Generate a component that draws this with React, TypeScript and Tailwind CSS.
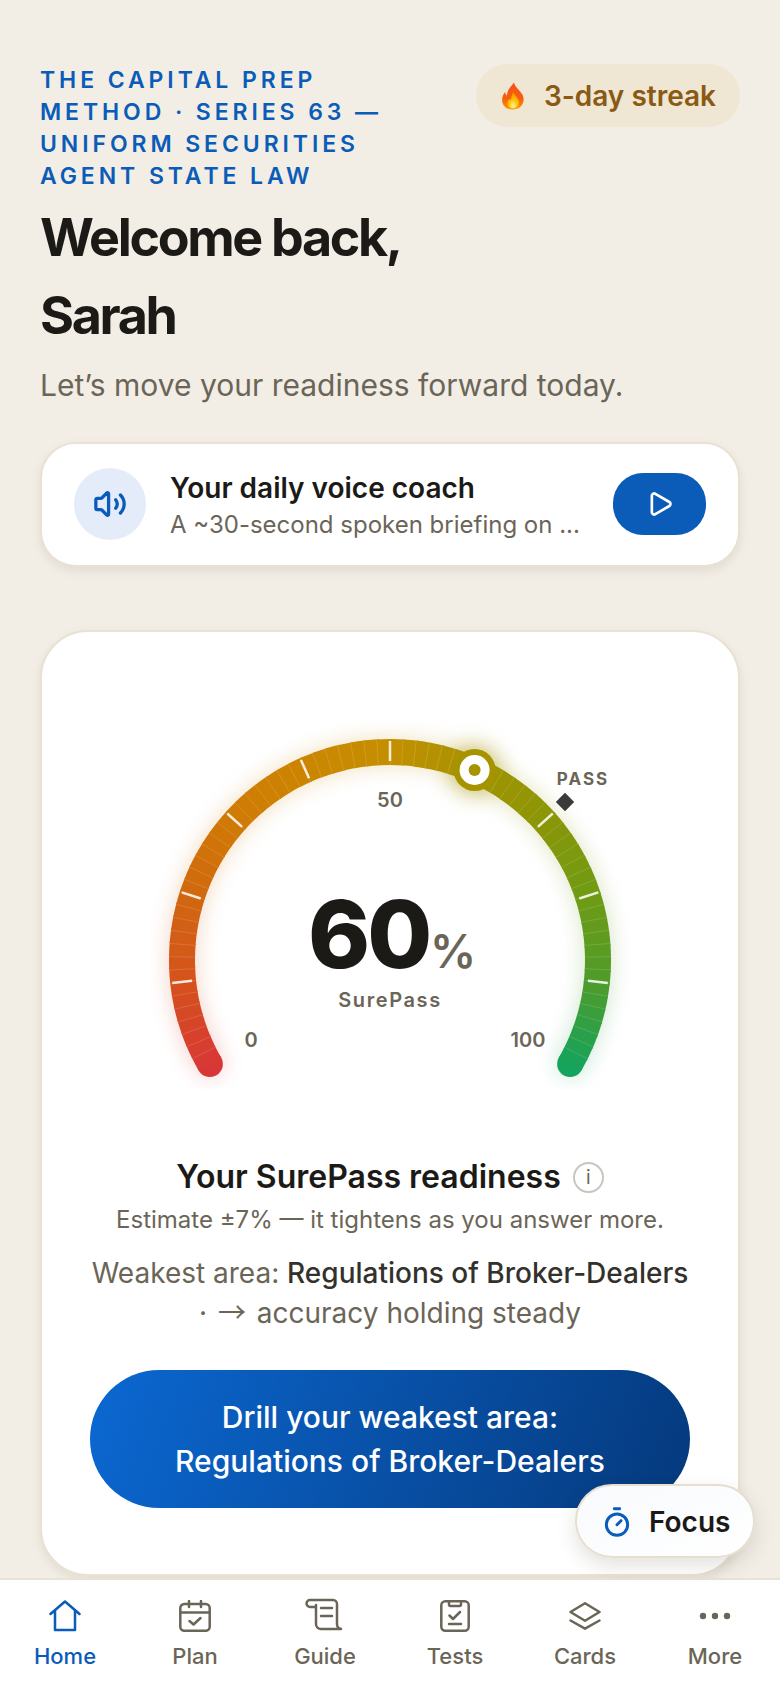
import React from 'react';
import { Volume2, Play, Timer } from 'lucide-react';

const CENTER_X = 240;
const CENTER_Y = 251;
const RADIUS = 208;
const START_DEG = 210;
const SWEEP = 240;
const SEGMENTS = 70;

const stops: [number, number[]][] = [
  [0, [216, 56, 53]],
  [0.1, [213, 82, 28]],
  [0.2, [209, 104, 15]],
  [0.3, [207, 122, 5]],
  [0.4, [204, 133, 0]],
  [0.5, [196, 143, 0]],
  [0.6, [165, 147, 0]],
  [0.7, [138, 150, 7]],
  [0.8, [111, 155, 20]],
  [0.9, [79, 155, 42]],
  [1, [22, 163, 92]],
];

const colorAt = (t: number) => {
  for (let i = 1; i < stops.length; i++) {
    if (t <= stops[i][0]) {
      const [t0, c0] = stops[i - 1];
      const [t1, c1] = stops[i];
      const k = (t - t0) / (t1 - t0);
      const c = c0.map((v, j) => Math.round(v + (c1[j] - v) * k));
      return `rgb(${c[0]},${c[1]},${c[2]})`;
    }
  }
  return 'rgb(22,163,92)';
};

const polar = (t: number, r: number) => {
  const a = ((START_DEG - SWEEP * t) * Math.PI) / 180;
  return { x: CENTER_X + r * Math.cos(a), y: CENTER_Y - r * Math.sin(a) };
};

const segments = Array.from({ length: SEGMENTS }, (_, i) => {
  const a = polar(i / SEGMENTS, RADIUS);
  const b = polar(Math.min(i + 1.15, SEGMENTS) / SEGMENTS, RADIUS);
  return {
    d: `M${a.x} ${a.y} A${RADIUS} ${RADIUS} 0 0 1 ${b.x} ${b.y}`,
    color: colorAt((i + 0.5) / SEGMENTS),
  };
});

const ArcBody: React.FC = () => {
  const first = polar(0, RADIUS);
  const last = polar(1, RADIUS);
  return (
    <>
      <circle cx={first.x} cy={first.y} r={13} fill={colorAt(0)} />
      <circle cx={last.x} cy={last.y} r={13} fill={colorAt(1)} />
      {segments.map((s, i) => (
        <path key={i} d={s.d} stroke={s.color} strokeWidth={26} fill="none" />
      ))}
    </>
  );
};

const Gauge: React.FC = () => {
  const thumb = polar(0.6, RADIUS);
  const pass = { x: 415, y: 93 };
  return (
    <svg width={480} height={380} viewBox="0 0 480 380" className="block mx-auto">
      <defs>
        <filter id="arcGlow" filterUnits="userSpaceOnUse" x="0" y="0" width="480" height="380">
          <feGaussianBlur stdDeviation="11" />
        </filter>
      </defs>
      <g filter="url(#arcGlow)" opacity={0.26}>
        <ArcBody />
      </g>
      <circle cx={thumb.x} cy={thumb.y} r={25} fill="#a59300" opacity={0.5} filter="url(#arcGlow)" />
      <ArcBody />
      {Array.from({ length: SEGMENTS - 1 }, (_, i) => {
        const t = (i + 1) / SEGMENTS;
        const a = polar(t, 195);
        const b = polar(t, 221);
        return <line key={i} x1={a.x} y1={a.y} x2={b.x} y2={b.y} stroke="#ffffff" strokeOpacity={0.14} strokeWidth={1} />;
      })}
      {[0.1, 0.2, 0.3, 0.4, 0.5, 0.6, 0.7, 0.8, 0.9].map((t) => {
        const a = polar(t, 199);
        const b = polar(t, 219);
        return <line key={t} x1={a.x} y1={a.y} x2={b.x} y2={b.y} stroke="#ffffff" strokeOpacity={0.85} strokeWidth={2.5} />;
      })}
      <circle cx={thumb.x} cy={thumb.y} r={21} fill="#a59300" />
      <circle cx={thumb.x} cy={thumb.y} r={15} fill="#ffffff" />
      <circle cx={thumb.x} cy={thumb.y} r={6} fill="#a59300" />
      <rect x={pass.x - 6.5} y={pass.y - 6.5} width={13} height={13} fill="#3a3a38" transform={`rotate(45 ${pass.x} ${pass.y})`} />
      <g fill="#6b6558" fontWeight={600}>
        <text x={240} y={98} textAnchor="middle" fontSize={20}>50</text>
        <text x={101} y={338} textAnchor="middle" fontSize={20}>0</text>
        <text x={378} y={338} textAnchor="middle" fontSize={20}>100</text>
        <text x={433} y={76} textAnchor="middle" fontSize={17} fontWeight={700} letterSpacing={2}>PASS</text>
        <text x={240} y={298} textAnchor="middle" fontSize={20} letterSpacing={1.6}>SurePass</text>
      </g>
      <text x={158} y={259} fontSize={94} fontWeight={800} fill="#1c1a17" letterSpacing={-3}>60</text>
      <text x={280} y={259} fontSize={46} fontWeight={600} fill="#6b6558">%</text>
    </svg>
  );
};

const Flame: React.FC = () => (
  <svg width={24} height={28} viewBox="0 0 24 28">
    <defs>
      <linearGradient id="flameOuter" x1="0" y1="0" x2="0" y2="1">
        <stop offset="0" stopColor="#f4511e" />
        <stop offset="0.6" stopColor="#f4600c" />
        <stop offset="1" stopColor="#ff9800" />
      </linearGradient>
      <radialGradient id="flameInner" cx="0.5" cy="0.85" r="0.7">
        <stop offset="0" stopColor="#fff59d" />
        <stop offset="0.55" stopColor="#ffc107" />
        <stop offset="1" stopColor="#ff9800" />
      </radialGradient>
    </defs>
    <path d="M13 0.5c1 5 6 7.5 8.6 12.5 2.6 5.5 0.4 14-9.6 14.5C3 27.500.2 21 1.4 15.500c0.5-2.500 1.800-4.500 2.800-5.500 0.200 1.800 0.700 3 1.800 3.800C6 8 9.500 5 13 0.500z" fill="url(#flameOuter)" />
    <path d="M12.500 10c0.500 3 5 5.500 5.500 10 0.300 3.800-2.500 6.500-6 6.500s-6-2.500-5.500-6c0.300-2 1.500-3.200 2.200-4 0.300 1 0.800 1.500 1.300 1.800 0-3 1-6 2.500-8.300z" fill="url(#flameInner)" />
  </svg>
);

const HomeIcon = () => (
  <svg width={32} height={32} viewBox="0 0 32 32" fill="none" stroke="currentColor" strokeWidth={2.5} strokeLinecap="round" strokeLinejoin="round">
    <path d="M1.500 14 16 1.500 30.500 14M6 10.500V30h20V10.500" />
  </svg>
);

const PlanIcon = () => (
  <svg width={32} height={32} viewBox="0 0 32 32" fill="none" stroke="currentColor" strokeWidth={2.5} strokeLinecap="round" strokeLinejoin="round">
    <rect x={1.3} y={4} width={29.4} height={26.8} rx={4} />
    <path d="M1.300 12.500h29.400M10 1v6M22 1v6M10.500 21l4 3.500 7-6.500" />
  </svg>
);

const GuideIcon = () => (
  <svg width={40} height={36} viewBox="0 0 40 36" fill="none" stroke="currentColor" strokeWidth={2.5} strokeLinecap="round" strokeLinejoin="round">
    <path d="M5 2h23a4 4 0 0 1 4 4v20a5 5 0 0 0 4 5H16a5 5 0 0 1-5-5V7M5 2a3.500 3.500 0 0 0 0 7h6M16 10h11M16 18h11" />
  </svg>
);

const TestsIcon = () => (
  <svg width={30} height={32} viewBox="0 0 30 32" fill="none" stroke="currentColor" strokeWidth={2.5} strokeLinecap="round" strokeLinejoin="round">
    <rect x={1.300} y={1.300} width={27.400} height={29.400} rx={4} />
    <path d="M9 1.500v3a1.500 1.500 0 0 0 1.500 1.500h9a1.500 1.500 0 0 0 1.500-1.500v-3M9.500 15.500l3.500 3.500 7-7M9 24h12" />
  </svg>
);

const CardsIcon = () => (
  <svg width={32} height={28} viewBox="0 0 32 28" fill="none" stroke="currentColor" strokeWidth={2.5} strokeLinecap="round" strokeLinejoin="round">
    <path d="M16 1.300 30.500 10 16 18.700 1.500 10zM1.500 18.500 16 26.700l14.500-8.200" />
  </svg>
);

const MoreIcon = () => (
  <svg width={32} height={8} viewBox="0 0 32 8" fill="currentColor">
    <circle cx={4} cy={4} r={3.200} />
    <circle cx={16} cy={4} r={3.200} />
    <circle cx={28} cy={4} r={3.200} />
  </svg>
);

const navItems = [
  { label: 'Home', icon: <HomeIcon />, active: true },
  { label: 'Plan', icon: <PlanIcon /> },
  { label: 'Guide', icon: <GuideIcon /> },
  { label: 'Tests', icon: <TestsIcon /> },
  { label: 'Cards', icon: <CardsIcon /> },
  { label: 'More', icon: <MoreIcon /> },
];

const App: React.FC = () => {
  return (
    <div className="relative h-[1688px] w-[780px] overflow-hidden bg-[#f2eee6] font-[Inter,sans-serif] flex flex-col">
      <main className="flex-1 min-h-0 overflow-hidden px-[40px] pt-[64px]">
        <div className="flex items-start justify-between">
          <p className="w-[355px] text-[23px] leading-[32px] font-semibold tracking-[0.17em] text-[#0a5cb8]">
            THE CAPITAL PREP METHOD · SERIES 63 — UNIFORM SECURITIES AGENT STATE LAW
          </p>
          <div className="flex h-[63px] items-center gap-[19px] rounded-full bg-[#efe6d3] pl-[25px] pr-[24px]">
            <Flame />
            <span className="text-[28px] font-semibold text-[#8a5a14]">3-day streak</span>
          </div>
        </div>
        <h1 className="mt-[7px] text-[52px] leading-[78px] font-bold tracking-[-0.045em] text-[#1c1a17]">
          Welcome back,
          <br />
          Sarah
        </h1>
        <p className="mt-[8px] text-[30px] leading-[44px] text-[#6b6558]">Let’s move your readiness forward today.</p>

        <section className="mt-[35px] flex h-[125px] items-center rounded-[36px] border-2 border-[#e9e1d2] bg-white pb-[2px] pl-[32px] pr-[32px] shadow-[0_4px_10px_rgba(90,70,30,0.1)]">
          <div className="flex h-[72px] w-[72px] shrink-0 items-center justify-center rounded-full bg-[#e3ecf8] text-[#0a5cb8]">
            <Volume2 size={34} strokeWidth={2.3} />
          </div>
          <div className="ml-[24px] mt-[2px] min-w-0 flex-1">
            <div className="text-[28px] leading-[40px] font-semibold text-[#1c1a17]">Your daily voice coach</div>
            <div className="text-[24px] leading-[34px] text-[#6b6558]">A ~30-second spoken briefing on ...</div>
          </div>
          <button className="flex h-[62px] w-[93px] shrink-0 items-center justify-center rounded-[30px] bg-[#0a5cb8] text-white">
            <Play size={28} strokeWidth={2.3} />
          </button>
        </section>

        <section className="mt-[63px] rounded-[48px] border-2 border-[#e9e1d2] bg-white px-[48px] pt-[77px] pb-[66px] shadow-[0_4px_10px_rgba(90,70,30,0.1)]">
          <div className="-mx-[48px]">
            <Gauge />
          </div>
          <div className="mt-[66px] flex items-center justify-center gap-[12px]">
            <h2 className="text-[32px] leading-[44px] font-semibold text-[#1c1a17]">Your SurePass readiness</h2>
            <span className="flex h-[31px] w-[31px] items-center justify-center rounded-full border-2 border-[#c9c6bf] text-[19px] leading-none text-[#6b6558]">i</span>
          </div>
          <p className="mt-[3px] text-center text-[24px] leading-[36px] text-[#6b6558]">Estimate ±7% — it tightens as you answer more.</p>
          <p className="mt-[15px] text-center text-[28px] leading-[40px] text-[#6b6558]">
            Weakest area: <span className="font-medium text-[#33312c]">Regulations of Broker-Dealers</span>
            <br />· <span className="mx-[3px] font-['Noto_Sans_CJK_JP',sans-serif] leading-none">→</span> accuracy holding steady
          </p>
          <button className="mt-[37px] block h-[138px] w-full rounded-full bg-[linear-gradient(110deg,#0b68d2,#05397c)] text-center text-[30px] leading-[44px] font-medium text-white">
            Drill your weakest area:
            <br />
            Regulations of Broker-Dealers
          </button>
        </section>
      </main>

      <nav className="relative grid h-[110px] shrink-0 grid-cols-6 border-t-2 border-[#e9e3d7] bg-white pt-[19px]">
        {navItems.map((item) => (
          <div key={item.label} className={`flex flex-col items-center ${item.active ? 'text-[#0a5cb8]' : 'text-[#6b6558]'}`}>
            <div className="flex h-[34px] items-center justify-center">{item.icon}</div>
            <span className="mt-[8px] text-[22px] leading-[30px] font-medium">{item.label}</span>
          </div>
        ))}
      </nav>

      <button className="absolute right-[25px] bottom-[130px] flex h-[74px] w-[180px] items-center gap-[16px] rounded-full border-2 border-[#e6dfd0] bg-gradient-to-br from-[#f8fafd] to-white pt-[2px] pl-[24px] shadow-[0_8px_20px_rgba(60,50,30,0.14)]">
        <Timer size={32} strokeWidth={2.2} className="text-[#0a5cb8]" />
        <span className="text-[28px] font-semibold text-[#1c1a17]">Focus</span>
      </button>
    </div>
  );
};

export default App;
